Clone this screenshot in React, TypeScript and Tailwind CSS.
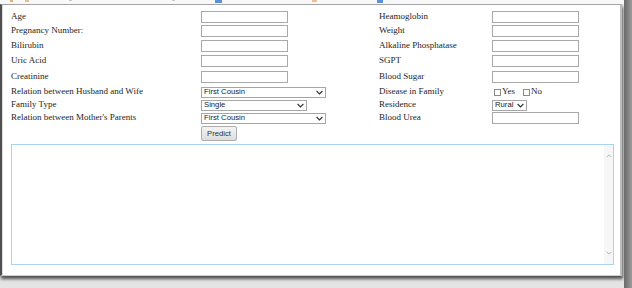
import React from "react";

const Chevron = ({ color = "#333" }: { color?: string }) => (
  <svg width="7" height="5" viewBox="0 0 7 5" className="block">
    <path d="M0.6 1 L3.5 3.9 L6.4 1" fill="none" stroke={color} strokeWidth="1.2" />
  </svg>
);

const TextInput = () => (
  <input
    type="text"
    className="w-[87px] h-[12px] border border-[#a9a9a9] bg-white px-[2px] text-[8px] outline-none"
  />
);

const Sel = ({ className, value }: { className: string; value: string }) => (
  <div
    role="combobox"
    className={
      "h-[11px] border border-[#a6a6a6] bg-white flex items-center justify-between pl-[2px] pr-[2px] " +
      className
    }
  >
    <span className="text-[7.7px] leading-none text-[#222] font-['Liberation_Sans',Arial,sans-serif] whitespace-nowrap">
      {value}
    </span>
    <Chevron />
  </div>
);

const Label = ({ children }: { children: React.ReactNode }) => (
  <div className="flex items-center whitespace-nowrap text-[9px] text-[#1e1e1e] font-['Liberation_Serif','Times_New_Roman',serif]">
    {children}
  </div>
);

const Cell = ({ children }: { children?: React.ReactNode }) => (
  <div className="flex items-center">{children}</div>
);

const Box = () => <span className="inline-block w-[7px] h-[7px] border border-[#8c8c8c] bg-white align-middle" />;

export default function App() {
  return (
    <div className="w-[632px] h-[288px] flex bg-[#e4e4e4] overflow-hidden">
      <div className="w-[624px] flex flex-col">
        <div className="h-[4px] bg-[#f8f8f8] flex items-start">
          <span className="ml-[10px] w-[3px] h-[2px] bg-[#e8b070]" />
          <span className="ml-[12px] w-[4px] h-[2px] bg-[#e8c090]" />
          <span className="ml-[40px] w-[3px] h-[1px] bg-[#c8c8c8]" />
          <span className="ml-[100px] w-[3px] h-[1px] bg-[#c8c8c8]" />
          <span className="ml-[40px] w-[7px] h-[3px] bg-[#5b8fd6]" />
          <span className="ml-[90px] w-[5px] h-[2px] bg-[#e8c090]" />
          <span className="ml-[60px] w-[6px] h-[3px] bg-[#5b8fd6]" />
        </div>
        <div className="w-[622px] h-[272px] bg-white border-t border-t-[#a4a4a4] border-l-2 border-l-[#505050] border-r-2 border-r-[#bcbcbc] border-b border-b-[#cfcfcf] shadow-[1px_3px_3px_rgba(0,0,0,0.65)]">
          <div className="h-full border-l border-l-[#dcdcdc] pt-[5px] pl-[8px] flex flex-col">
            <div className="grid grid-cols-[190px_178px_113px_1fr] grid-rows-[14px_14px_15px_16px_16px_14px_12px_14px_17px]">
              <Label>Age</Label>
              <Cell><TextInput /></Cell>
              <Label>Heamoglobin</Label>
              <Cell><TextInput /></Cell>

              <Label>Pregnancy Number:</Label>
              <Cell><TextInput /></Cell>
              <Label>Weight</Label>
              <Cell><TextInput /></Cell>

              <Label>Bilirubin</Label>
              <Cell><TextInput /></Cell>
              <Label>Alkaline Phosphatase</Label>
              <Cell><TextInput /></Cell>

              <Label>Uric Acid</Label>
              <Cell><TextInput /></Cell>
              <Label>SGPT</Label>
              <Cell><TextInput /></Cell>

              <Label>Creatinine</Label>
              <Cell><TextInput /></Cell>
              <Label>Blood Sugar</Label>
              <Cell><TextInput /></Cell>

              <Label>Relation between Husband and Wife</Label>
              <Cell><Sel className="w-[125px]" value="First Cousin" /></Cell>
              <Label>Disease in Family</Label>
              <div className="flex items-center text-[9px] text-[#1e1e1e] font-['Liberation_Serif','Times_New_Roman',serif]">
                <span className="ml-[2px] flex"><Box /></span>
                <span className="ml-[1px]">Yes</span>
                <span className="ml-[8px] flex"><Box /></span>
                <span className="ml-[1px]">No</span>
              </div>

              <Label>Family Type</Label>
              <Cell><Sel className="w-[106px]" value="Single" /></Cell>
              <Label>Residence</Label>
              <Cell><Sel className="w-[35px]" value="Rural" /></Cell>

              <Label>Relation between Mother's Parents</Label>
              <Cell><Sel className="w-[125px]" value="First Cousin" /></Cell>
              <Label>Blood Urea</Label>
              <Cell><TextInput /></Cell>

              <div />
              <Cell>
                <button className="w-[36px] h-[15px] border border-[#adadad] rounded-[2px] bg-gradient-to-b from-[#f4f4f4] to-[#dddddd] text-[7.7px] text-[#333] font-['Liberation_Sans',Arial,sans-serif] leading-none">
                  Predict
                </button>
              </Cell>
              <div />
              <div />
            </div>
            <div className="mt-[2px] w-[603px] h-[121px] border border-[#a8d4ee] flex">
              <textarea className="flex-1 resize-none outline-none bg-white" />
              <div className="w-[9px] bg-[#f6f6f6] flex flex-col items-center justify-between pt-[9px] pb-[9px]">
                <svg width="6" height="4" viewBox="0 0 6 4" className="block">
                  <path d="M0.5 3.3 L3 0.8 L5.5 3.3" fill="none" stroke="#b5b5b5" strokeWidth="1" />
                </svg>
                <svg width="6" height="4" viewBox="0 0 6 4" className="block">
                  <path d="M0.5 0.7 L3 3.2 L5.5 0.7" fill="none" stroke="#b5b5b5" strokeWidth="1" />
                </svg>
              </div>
            </div>
          </div>
        </div>
      </div>
      <div className="w-[8px] h-full bg-gradient-to-r from-[#6a6a6a] to-[#9c9c9c]" />
    </div>
  );
}
